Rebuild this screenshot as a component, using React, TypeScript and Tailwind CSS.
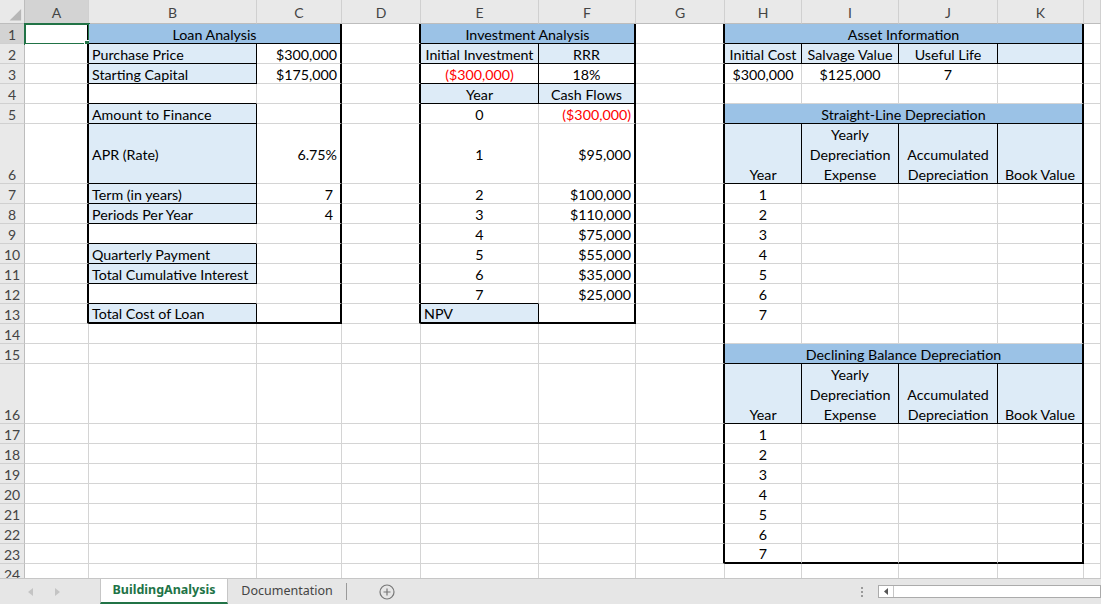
import React from "react";

type Edge = "grid" | "thin" | "thick";

type Cell = {
  text?: string;
  lines?: string[];
  span?: number;
  fill?: "band" | "label";
  align?: "left" | "center" | "right";
  red?: boolean;
  middle?: boolean;
  general?: boolean;
};

const COLS = ["A", "B", "C", "D", "E", "F", "G", "H", "I", "J", "K", ""];

const cells: Record<string, Cell> = {
  // loan analysis
  B1: { text: "Loan Analysis", span: 2, fill: "band", align: "center" },
  B2: { text: "Purchase Price", fill: "label" },
  C2: { text: "$300,000", align: "right" },
  B3: { text: "Starting Capital", fill: "label" },
  C3: { text: "$175,000", align: "right" },
  B5: { text: "Amount to Finance", fill: "label" },
  B6: { text: "APR (Rate)", fill: "label", middle: true },
  C6: { text: "6.75%", align: "right", middle: true },
  B7: { text: "Term (in years)", fill: "label" },
  C7: { text: "7", align: "right", general: true },
  B8: { text: "Periods Per Year", fill: "label" },
  C8: { text: "4", align: "right", general: true },
  B10: { text: "Quarterly Payment", fill: "label" },
  B11: { text: "Total Cumulative Interest", fill: "label" },
  B13: { text: "Total Cost of Loan", fill: "label" },

  // investment analysis
  E1: { text: "Investment Analysis", span: 2, fill: "band", align: "center" },
  E2: { text: "Initial Investment", fill: "label", align: "center" },
  F2: { text: "RRR", fill: "label", align: "center" },
  E3: { text: "($300,000)", align: "center", red: true },
  F3: { text: "18%", align: "center" },
  E4: { text: "Year", fill: "label", align: "center" },
  F4: { text: "Cash Flows", fill: "label", align: "center" },
  E5: { text: "0", align: "center" },
  F5: { text: "($300,000)", align: "right", red: true },
  E6: { text: "1", align: "center", middle: true },
  F6: { text: "$95,000", align: "right", middle: true },
  E7: { text: "2", align: "center" },
  F7: { text: "$100,000", align: "right" },
  E8: { text: "3", align: "center" },
  F8: { text: "$110,000", align: "right" },
  E9: { text: "4", align: "center" },
  F9: { text: "$75,000", align: "right" },
  E10: { text: "5", align: "center" },
  F10: { text: "$55,000", align: "right" },
  E11: { text: "6", align: "center" },
  F11: { text: "$35,000", align: "right" },
  E12: { text: "7", align: "center" },
  F12: { text: "$25,000", align: "right" },
  E13: { text: "NPV", fill: "label" },

  // asset information
  H1: { text: "Asset Information", span: 4, fill: "band", align: "center" },
  H2: { text: "Initial Cost", fill: "label", align: "center" },
  I2: { text: "Salvage Value", fill: "label", align: "center" },
  J2: { text: "Useful Life", fill: "label", align: "center" },
  K2: { fill: "label" },
  H3: { text: "$300,000", align: "center" },
  I3: { text: "$125,000", align: "center" },
  J3: { text: "7", align: "center" },
  H5: { text: "Straight-Line Depreciation", span: 4, fill: "band", align: "center" },
  H15: { text: "Declining Balance Depreciation", span: 4, fill: "band", align: "center" },
};

// the two depreciation tables share headers and year columns
[6, 16].forEach((r) => {
  cells[`H${r}`] = { text: "Year", fill: "label", align: "center" };
  cells[`I${r}`] = { lines: ["Yearly", "Depreciation", "Expense"], fill: "label" };
  cells[`J${r}`] = { lines: ["Accumulated", "Depreciation"], fill: "label" };
  cells[`K${r}`] = { text: "Book Value", fill: "label", align: "center" };
  for (let y = 1; y <= 7; y++) {
    cells[`H${r + y}`] = { text: String(y), align: "center" };
  }
});

function rightEdge(r: number, c: number): Edge {
  if (r <= 13 && [0, 2, 3, 5].includes(c)) return "thick";
  if (r <= 23 && (c === 6 || c === 10)) return "thick";
  if (c === 1 && [2, 3, 5, 6, 7, 8, 10, 11, 13].includes(r)) return "thin";
  if (c === 4 && [2, 3, 4, 13].includes(r)) return "thin";
  if (c >= 7 && c <= 9 && [2, 6, 16].includes(r)) return "thin";
  return "grid";
}

function bottomEdge(r: number, c: number): Edge {
  if (r === 13 && [1, 2, 4, 5].includes(c)) return "thick";
  if (r === 23 && c >= 7 && c <= 10) return "thick";
  if (c === 1 && r <= 12) return "thin";
  if ((c === 4 || c === 5) && r <= 4) return "thin";
  if (c === 4 && r === 12) return "thin";
  if (c >= 7 && c <= 10 && [1, 2, 5, 6, 15, 16].includes(r)) return "thin";
  return "grid";
}

const RIGHT: Record<Edge, string> = {
  grid: "border-r border-r-[#d4d4d4]",
  thin: "border-r border-r-black",
  thick: "border-r-2 border-r-black",
};

const BOTTOM: Record<Edge, string> = {
  grid: "border-b border-b-[#d4d4d4]",
  thin: "border-b border-b-black",
  thick: "border-b-2 border-b-black",
};

const JUSTIFY = { left: "justify-start", center: "justify-center", right: "justify-end" };

function SheetCell({ r, c, cell }: { r: number; c: number; cell?: Cell }) {
  const span = cell?.span ?? 1;
  const last = c + span - 1;
  const fill =
    cell?.fill === "band" ? "bg-[#9bc2e6]" : cell?.fill === "label" ? "bg-[#ddebf7]" : "bg-white";
  const spanCls = span === 4 ? "col-span-4" : span === 2 ? "col-span-2" : "";
  const edges = `${RIGHT[rightEdge(r, last)]} ${BOTTOM[bottomEdge(r, c)]}`;

  if (cell?.lines) {
    return (
      <div className={`flex flex-col items-center justify-end overflow-hidden leading-[20px] ${fill} ${edges}`}>
        <div className="flex translate-y-[2px] flex-col items-center">
          {cell.lines.map((l) => (
            <span key={l}>{l}</span>
          ))}
        </div>
      </div>
    );
  }

  const align = JUSTIFY[cell?.align ?? "left"];
  return (
    <div
      className={`relative flex whitespace-nowrap px-[3px] leading-[17px] ${spanCls} ${fill} ${edges} ${align} ${
        cell?.middle ? "items-center pt-[2px]" : "items-end"
      } ${cell?.red ? "text-[#ff0000]" : "text-black"} ${cell?.general ? "pr-[7px]" : ""}`}
    >
      {cell?.text}
      {r === 1 && c === 0 && (
        <>
          <div className="absolute -left-px -top-px h-[22px] w-[66px] border-2 border-[#217346]" />
          <div className="absolute -bottom-[3px] -right-[3px] h-[6px] w-[6px] border border-white bg-[#217346]" />
        </>
      )}
    </div>
  );
}

function Sheet() {
  const out: React.ReactNode[] = [];

  // column headers
  out.push(
    <div key="corner" className="flex items-end justify-end border-b border-r border-[#bdbdbd] bg-[#e9e9e9]">
      <svg width="25" height="23" viewBox="0 0 25 23">
        <polygon points="10,21 22,21 22,9" fill="#b7b7b7" />
      </svg>
    </div>
  );
  COLS.forEach((l, i) => {
    out.push(
      <div
        key={`h${i}`}
        className={`flex items-center justify-center border-b border-r border-b-[#bdbdbd] border-r-[#d0d0d0] pt-px text-[14px] text-[#444] ${
          i === 0 ? "bg-[#d3d3d3]" : "bg-[#e9e9e9]"
        }`}
      >
        {l}
      </div>
    );
  });

  for (let r = 1; r <= 24; r++) {
    out.push(
      <div
        key={`r${r}`}
        className={`flex items-end justify-center border-b border-r border-b-[#d0d0d0] border-r-[#bdbdbd] text-[14px] leading-[17px] text-[#444] ${
          r === 1 ? "bg-[#d3d3d3]" : "bg-[#e9e9e9]"
        }`}
      >
        {r}
      </div>
    );
    let skip = 0;
    for (let c = 0; c < COLS.length; c++) {
      if (skip > 0) {
        skip--;
        continue;
      }
      const ref = `${COLS[c]}${r}`;
      const cell = c < 11 ? cells[ref] : undefined;
      if (cell?.span) skip = cell.span - 1;
      out.push(<SheetCell key={`${r}-${c}`} r={r} c={c} cell={cell} />);
    }
  }

  return (
    <div className="h-[578px] overflow-hidden">
      <div className="grid grid-cols-[25px_64px_168px_85px_79px_118px_97px_89px_77px_97px_99px_86px_1fr] grid-rows-[24px_repeat(5,20px)_60px_repeat(9,20px)_60px_repeat(8,20px)] font-['Lato',sans-serif] text-[14.25px]">
        {out}
      </div>
    </div>
  );
}

function TabBar() {
  return (
    <div className="flex h-[26px] items-stretch border-t border-t-[#c6c6c6] bg-[#e6e6e6] font-['Noto_Sans',sans-serif] text-[12.5px]">
      <div className="flex w-[100px] items-center gap-[22px] pl-[28px] text-[#c0c0c0]">
        <svg width="5" height="8" viewBox="0 0 5 8">
          <polygon points="5,0 5,8 0,4" fill="#c4c4c4" />
        </svg>
        <svg width="5" height="8" viewBox="0 0 5 8">
          <polygon points="0,0 0,8 5,4" fill="#c4c4c4" />
        </svg>
      </div>
      <div className="flex w-[128px] items-center justify-center border-x border-x-[#c6c6c6] border-b-2 border-b-[#217346] bg-white font-bold text-[#217346]">
        BuildingAnalysis
      </div>
      <div className="flex w-[118px] items-center justify-center text-[#444]">Documentation</div>
      <div className="my-[4px] w-px bg-[#9a9a9a]" />
      <div className="flex w-[80px] items-center justify-center">
        <svg width="16" height="16" viewBox="0 0 16 16" fill="none" stroke="#777" strokeWidth="1.2">
          <circle cx="8" cy="8" r="7" />
          <path d="M8 4.5v7M4.5 8h7" />
        </svg>
      </div>
      <div className="flex-1" />
      <div className="flex w-[16px] flex-col items-center justify-center gap-[2px]">
        <span className="h-[2px] w-[2px] bg-[#9a9a9a]" />
        <span className="h-[2px] w-[2px] bg-[#9a9a9a]" />
        <span className="h-[2px] w-[2px] bg-[#9a9a9a]" />
      </div>
      <div className="my-[6px] ml-[8px] flex w-[223px] border border-[#ababab] bg-white">
        <div className="flex w-[15px] items-center justify-center border-r border-r-[#c6c6c6]">
          <svg width="4" height="7" viewBox="0 0 4 7">
            <polygon points="4,0 4,7 0,3.5" fill="#555" />
          </svg>
        </div>
      </div>
    </div>
  );
}

export default function App() {
  return (
    <div className="h-[604px] w-[1101px] overflow-hidden bg-white">
      <Sheet />
      <TabBar />
    </div>
  );
}
